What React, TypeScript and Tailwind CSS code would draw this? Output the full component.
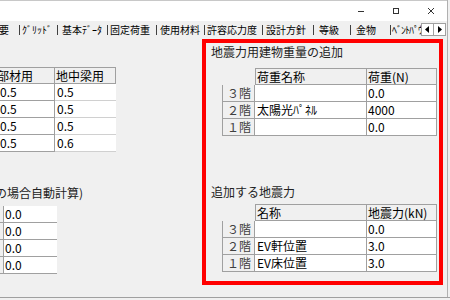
const font = { fontFamily: '"Noto Sans CJK JP", "Noto Sans", sans-serif' };

const tabs = [
  { label: "概要", cls: "w-[30px] pl-0 -ml-[11px]" },
  { label: "ｸﾞﾘｯﾄﾞ", cls: "w-[37px] pl-[2px]" },
  { label: "基本ﾃﾞｰﾀ", cls: "w-[49px] pl-[4px]" },
  { label: "固定荷重", cls: "w-[48px] pl-[2px]" },
  { label: "使用材料", cls: "w-[47px] pl-[3px]" },
  { label: "許容応力度", cls: "w-[57px] pl-[2px]" },
  { label: "設計方針", cls: "w-[50px] pl-[3px]" },
  { label: "等級", cls: "w-[36px] pl-[5px]" },
  { label: "金物", cls: "w-[39px] pl-[5px]" },
];

type Row = { label: string; name: string; value: string };

function FloorTable({ head1, head2, rows }: { head1: string; head2: string; rows: Row[] }) {
  return (
    <div className="ml-[16px] flex flex-col text-[12px] leading-[15px] text-black">
      <div className="flex h-[17px]">
        <div className="w-[33px]" />
        <div className="w-[112px] border border-[#a0a0a0] bg-[#f0f0f0] pl-[1px]">{head1}</div>
        <div className="w-[70px] border-y border-r border-[#a0a0a0] bg-[#f0f0f0] pl-[1px]">{head2}</div>
      </div>
      {rows.map((r) => (
        <div key={r.label} className="flex h-[17px]">
          <div className="w-[33px] border-x border-b border-[#a0a0a0] bg-[#f0f0f0] pl-[4px] text-[#404040]">
            {r.label}
          </div>
          <div className="w-[112px] border-b border-r border-[#a0a0a0] bg-white pl-[2px]">{r.name}</div>
          <div className="w-[70px] border-b border-r border-[#a0a0a0] bg-white pl-[1px]">{r.value}</div>
        </div>
      ))}
    </div>
  );
}

export default function App() {
  const leftRows = [
    ["0.5", "0.5"],
    ["0.5", "0.5"],
    ["0.5", "0.5"],
    ["0.5", "0.6"],
  ];

  return (
    <div className="relative h-[300px] w-[450px] overflow-hidden bg-[#f0f0f0]" style={font}>
      <div className="flex h-[297px] w-[448px] flex-col border-r border-[#b0b0b0]">
        {/* title bar */}
        <div className="flex h-[21px] items-center justify-end border-t border-[#c8c8c8] bg-white pr-[12px] text-[#333]">
          <svg width="8" height="8" viewBox="0 0 8 8" className="mr-[27px]">
            <line x1="1" y1="4.5" x2="7" y2="4.5" stroke="#333" strokeWidth="1" />
          </svg>
          <svg width="8" height="8" viewBox="0 0 8 8" className="mr-[27px]">
            <rect x="1.5" y="1.5" width="5" height="5" fill="none" stroke="#333" strokeWidth="1" />
          </svg>
          <svg width="8" height="8" viewBox="0 0 8 8">
            <path d="M1 1 L7 7 M7 1 L1 7" stroke="#333" strokeWidth="1" />
          </svg>
        </div>

        {/* tab strip */}
        <div className="flex h-[17px] items-center whitespace-nowrap text-[10px] leading-[13px] text-black">
          {tabs.map((t) => (
            <div key={t.label} className="flex shrink-0 items-center">
              <div className={`shrink-0 ${t.cls}`}>{t.label}</div>
              <div className="h-[10px] w-px shrink-0 bg-[#404040]" />
            </div>
          ))}
          <div className="w-[30px] shrink-0 overflow-hidden pl-[1px] tracking-[-1px]">ﾍﾞﾝﾄﾊﾟｳ</div>
          <div className="flex h-[13px] w-[13px] shrink-0 items-center justify-center border border-[#a0a0a0] bg-white">
            <svg width="5" height="7" viewBox="0 0 5 7">
              <path d="M4 0 L0 3.5 L4 7 Z" fill="#000" />
            </svg>
          </div>
          <div className="flex h-[13px] w-[12px] shrink-0 items-center justify-center border-y border-r border-[#a0a0a0] bg-white">
            <svg width="5" height="7" viewBox="0 0 5 7">
              <path d="M1 0 L5 3.5 L1 7 Z" fill="#000" />
            </svg>
          </div>
        </div>

        {/* content */}
        <div className="flex flex-1">
          <div className="flex w-[202px] flex-col text-[12px] leading-[15px] text-black">
            <div className="mt-[29px] -ml-[20px] flex flex-col">
              <div className="flex h-[17px]">
                <div className="w-[75px] border-y border-r border-[#a0a0a0] bg-[#f0f0f0] pl-[17px]">部材用</div>
                <div className="w-[61px] border-y border-r border-[#a0a0a0] bg-[#f0f0f0] pl-[1px]">地中梁用</div>
              </div>
              {leftRows.map((r, i) => (
                <div key={i} className="flex h-[17px]">
                  <div className="w-[75px] border-b border-r border-[#a0a0a0] bg-white pl-[20px]">{r[0]}</div>
                  <div className="w-[61px] border-b border-[#d0d0d0] bg-white pl-[2px]">{r[1]}</div>
                </div>
              ))}
            </div>

            <div className="mt-[33px] -ml-[5px] h-[16px] leading-[16px] text-[#222]">の場合自動計算)</div>

            <div className="mt-[5px] flex flex-col">
              {["0.0", "0.0", "0.0", "0.0"].map((v, i) => (
                <div key={i} className="flex h-[17px]">
                  <div className="w-[4px] border-b border-r border-[#a0a0a0] bg-[#f0f0f0]" />
                  <div className="w-[53px] border-b border-[#a0a0a0] bg-white pl-[1px]">{v}</div>
                </div>
              ))}
            </div>
          </div>

          {/* highlighted panel */}
          <div className="mt-px flex h-[246px] w-[241px] flex-col border-[4px] border-[#ff0000] text-[12px] leading-[16px] text-[#222]">
            <div className="mt-px h-[16px] pl-[5px]">地震力用建物重量の追加</div>
            <div className="mt-[8px]">
              <FloorTable
                head1="荷重名称"
                head2="荷重(N)"
                rows={[
                  { label: "３階", name: "", value: "0.0" },
                  { label: "２階", name: "太陽光ﾊﾟﾈﾙ", value: "4000" },
                  { label: "１階", name: "", value: "0.0" },
                ]}
              />
            </div>
            <div className="mt-[48px] h-[16px] pl-[5px]">追加する地震力</div>
            <div className="mt-[4px]">
              <FloorTable
                head1="名称"
                head2="地震力(kN)"
                rows={[
                  { label: "３階", name: "", value: "0.0" },
                  { label: "２階", name: "EV軒位置", value: "3.0" },
                  { label: "１階", name: "EV床位置", value: "3.0" },
                ]}
              />
            </div>
          </div>
        </div>
      </div>
      <div className="h-px w-full bg-[#a0a0a0]" />
    </div>
  );
}
